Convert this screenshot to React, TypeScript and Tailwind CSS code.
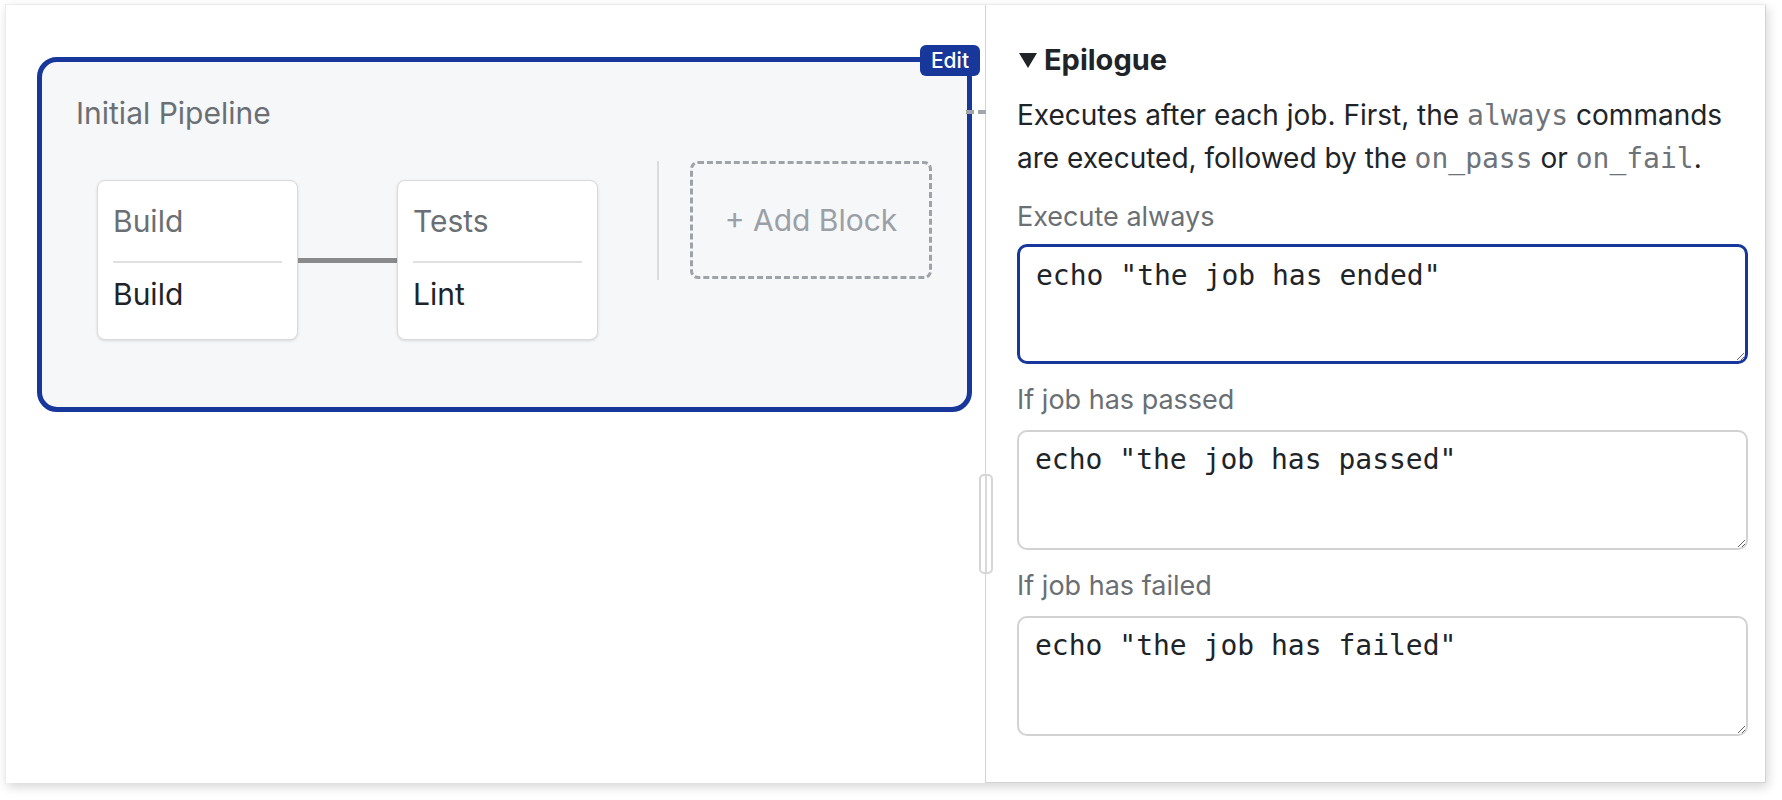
const BLUE = 'border-[#17379a]'

function BlockCard({ title, job }: { title: string; job: string }) {
  return (
    <div className="w-[201px] h-[160px] bg-white rounded-[8px] border border-[#dadada] shadow-[0_1px_3px_rgba(0,0,0,0.12)] px-[15px] pt-[22px]">
      <div className="text-[30px] leading-[36px] text-[#6a6f74]">{title}</div>
      <div className="mt-[22px] h-[2px] bg-[#e0e0e0]" />
      <div className="mt-[13px] text-[30px] leading-[36px] text-[#202428]">{job}</div>
    </div>
  )
}

function LeftPanel() {
  return (
    <div className="w-[979px] shrink-0 pl-[31px] pt-[52px]">
      <div className={`relative w-[935px] h-[355px] rounded-[20px] border-[5px] ${BLUE} bg-[#f6f7f9] pl-[34px] pt-[33px]`}>
        <div className="absolute right-[-13px] top-[-17px] w-[60px] h-[31px] rounded-[6px] bg-[#17379a] text-white text-[21px] leading-[31px] text-center font-medium">
          Edit
        </div>
        <div className="absolute right-[-19px] top-[48px] w-[20px] border-t-[4px] border-dashed border-[#a3a7ab]" />
        <div className="text-[30px] leading-[36px] text-[#6a6f74]">Initial Pipeline</div>
        <div className="mt-[30px] ml-[21px] flex items-start">
          <div className="mt-[19px] flex items-center">
            <BlockCard title="Build" job="Build" />
            <div className="w-[99px] h-[5px] bg-[#8a8a8a]" />
            <BlockCard title="Tests" job="Lint" />
          </div>
          <div className="ml-[59px] w-[2px] h-[119px] bg-[#d9dbde]" />
          <div className="ml-[31px] w-[242px] h-[118px] rounded-[8px] border-[3px] border-dashed border-[#9ea3a8] flex items-center justify-center text-[30px] text-[#9aa0a6]">
            + Add Block
          </div>
        </div>
      </div>
    </div>
  )
}

function Code({ children }: { children: string }) {
  return <span className="font-['DejaVu_Sans_Mono',monospace] text-[28px] text-[#6e7379]">{children}</span>
}

function Field({ label, value, active, first }: { label: string; value: string; active?: boolean; first?: boolean }) {
  return (
    <div className={first ? 'mt-[19px]' : 'mt-[18px]'}>
      <div className="text-[27px] leading-[36px] text-[#6a6f74]">{label}</div>
      <textarea
        readOnly
        defaultValue={value}
        className={`block w-full h-[120px] rounded-[10px] bg-white outline-none px-[16px] font-['DejaVu_Sans_Mono',monospace] text-[28px] leading-[36px] text-[#202428] ${
          active ? `mt-[9px] border-[3px] ${BLUE} pt-[11px]` : 'mt-[12px] border-2 border-[#d2d2d2] pt-[10px]'
        }`}
      />
    </div>
  )
}

function RightPanel() {
  return (
    <div className="flex-1 border-l border-r border-b border-[#d3d3d3] pl-[31px] pr-[17px] pt-[37px]">
      <div className="flex items-center gap-[7px] text-[29px] leading-[36px] font-bold text-[#202428]">
        <svg width="18" height="15" viewBox="0 0 18 15" className="ml-[2px]">
          <polygon points="0,0 18,0 9,15" fill="#202428" />
        </svg>
        Epilogue
      </div>
      <p className="mt-[16px] text-[28px] leading-[43px] text-[#202428]">
        Executes after each job. First, the <Code>always</Code> commands
        <br />
        are executed, followed by the <Code>on_pass</Code> or <Code>on_fail</Code>.
      </p>
      <Field first active label="Execute always" value={'echo "the job has ended"'} />
      <Field label="If job has passed" value={'echo "the job has passed"'} />
      <Field label="If job has failed" value={'echo "the job has failed"'} />
    </div>
  )
}

export default function App() {
  return (
    <div className="w-[1782px] h-[800px] bg-white pl-[5px] pt-[4px] font-['Inter',sans-serif]">
      <div className="relative flex w-[1761px] h-[779px] bg-white border-t border-l border-[#ececec] shadow-[2px_4px_10px_rgba(0,0,0,0.16)]">
        <LeftPanel />
        <RightPanel />
        <div className="absolute left-[973px] top-[469px] w-[14px] h-[100px] rounded-[5px] border-2 border-[#d6d6d6] bg-white flex justify-center">
          <div className="w-[2px] h-full bg-[#dadada]" />
        </div>
      </div>
    </div>
  )
}
